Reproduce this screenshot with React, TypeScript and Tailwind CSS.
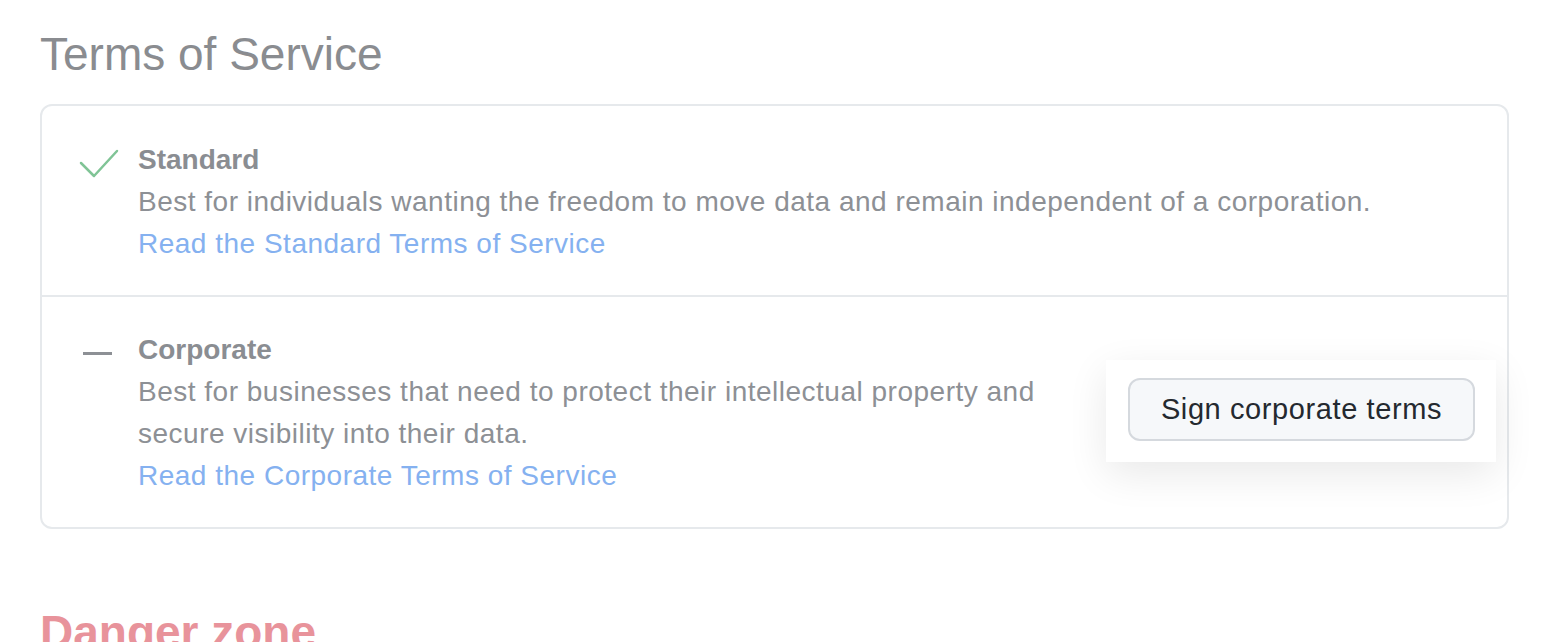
import React from "react";

function CheckMark() {
  return (
    <svg width="44" height="32" viewBox="0 0 44 32" fill="none" className="block">
      <polyline
        points="3,15 16,28 39,3"
        stroke="#80c496"
        strokeWidth="2.5"
        strokeLinecap="round"
        strokeLinejoin="round"
      />
    </svg>
  );
}

function Dash() {
  return <div className="h-[3px] w-[29px] bg-[#8d9095] ml-[5px]" />;
}

export default function App() {
  return (
    <div
      className="min-h-[642px] bg-white px-10 pt-[24px] overflow-hidden"
      style={{ fontFamily: '"Liberation Sans", Arial, sans-serif' }}
    >
      <h2 className="text-[46px] leading-[60px] font-normal text-[#8a8c90]">
        Terms of Service
      </h2>

      <div className="mt-[20px] w-[1469px] rounded-[12px] border-2 border-[#e6e9ec]">
        {/* Standard */}
        <div className="flex pt-[33px] pb-[30px] pl-[36px] pr-[32px]">
          <div className="w-[60px] shrink-0 pt-[9px]">
            <CheckMark />
          </div>
          <div className="flex-1 text-[28px] leading-[42px] tracking-[0.5px] text-[#8d9095]">
            <div className="font-semibold tracking-normal text-[#8a8d92]">Standard</div>
            <div>
              Best for individuals wanting the freedom to move data and remain independent of a corporation.
            </div>
            <a href="#" className="text-[#85b1f0]">
              Read the Standard Terms of Service
            </a>
          </div>
        </div>

        <div className="h-[2px] bg-[#e6e9ec]" />

        {/* Corporate */}
        <div className="flex items-center pt-[32px] pb-[30px] pl-[36px] pr-[11px]">
          <div className="w-[60px] shrink-0 self-start pt-[23px]">
            <Dash />
          </div>
          <div className="flex-1 text-[28px] leading-[42px] tracking-[0.5px] text-[#8d9095]">
            <div className="font-semibold tracking-normal text-[#8a8d92]">Corporate</div>
            <div>
              Best for businesses that need to protect their intellectual property and secure visibility into their data.
            </div>
            <a href="#" className="text-[#85b1f0]">
              Read the Corporate Terms of Service
            </a>
          </div>
          <div className="ml-[32px] -mt-[4px] shrink-0 bg-white pl-[22px] pr-[21px] pt-[18px] pb-[21px] shadow-[0_12px_40px_rgba(0,0,0,0.09)]">
            <button className="h-[63px] w-[347px] rounded-[12px] border-2 border-[#d5d9de] bg-[#f6f8fa] text-[29px] tracking-[0.6px] font-medium text-[#24292f]">
              Sign corporate terms
            </button>
          </div>
        </div>
      </div>

      <h2 className="mt-[73px] text-[46px] leading-[60px] font-semibold text-[#e8939b]">
        Danger zone
      </h2>
    </div>
  );
}
